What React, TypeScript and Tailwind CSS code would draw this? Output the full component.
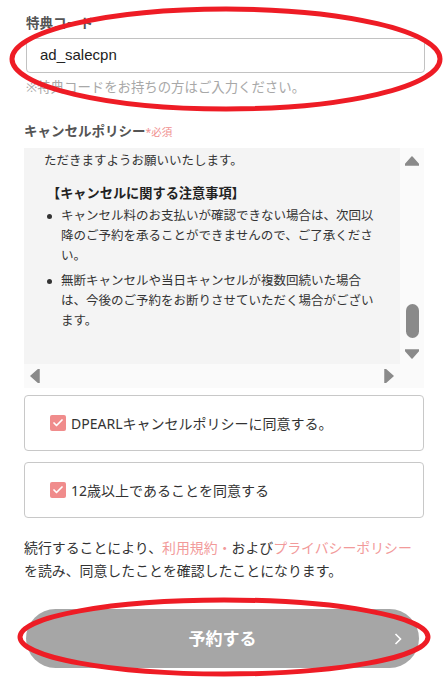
import { Check } from 'lucide-react'

const jp = "font-['Noto_Sans','Noto_Sans_CJK_JP',sans-serif]"

function AgreeBox({ label }: { label: string }) {
  return (
    <div className="flex h-[56px] items-center rounded-[4px] border border-[#c8c8c8] bg-white pl-[25px]">
      <span className="flex h-[16px] w-[16px] items-center justify-center rounded-[2px] bg-[#f08c8c]">
        <Check className="h-[12px] w-[12px] text-white" strokeWidth={3.5} />
      </span>
      <span className="ml-[5px] text-[14px] text-[#333]">{label}</span>
    </div>
  )
}

function Tri({ dir }: { dir: 'up' | 'down' | 'left' | 'right' }) {
  const pts = {
    up: '0,10 7,2 14,10',
    down: '0,2 14,2 7,10',
    left: '10,0 10,14 2,7',
    right: '2,0 2,14 10,7',
  }[dir]
  const size = dir === 'up' || dir === 'down' ? 'h-[12px] w-[14px]' : 'h-[14px] w-[12px]'
  return (
    <svg viewBox={dir === 'up' || dir === 'down' ? '0 0 14 12' : '0 0 12 14'} className={size}>
      <polygon points={pts} fill="#8a8a8a" strokeLinejoin="round" stroke="#8a8a8a" strokeWidth="1.5" />
    </svg>
  )
}

function Bullet({ children, className = '' }: { children: string; className?: string }) {
  return (
    <li className={`flex ${className}`}>
      <span className="flex h-[20px] w-[17px] shrink-0 items-center pl-[3px]">
        <span className="h-[5px] w-[5px] rounded-full bg-[#333]" />
      </span>
      <span>{children}</span>
    </li>
  )
}

export default function App() {
  return (
    <div className={`relative h-[686px] w-[445px] overflow-hidden bg-white ${jp}`}>
      <div className="px-[24px] pt-[13px]">
        {/* 特典コード */}
        <div className="pl-[2px] text-[13.5px] font-bold leading-[20px] text-[#555]">特典コード</div>
        <div className="ml-[2px] mt-[5px] flex h-[35px] w-[399px] items-center rounded-[4px] border border-[#c2c2c2] bg-white pl-[13px] font-['Liberation_Sans',sans-serif] text-[15px] text-[#222]">
          ad_salecpn
        </div>
        <div className="mt-[4px] pl-[2px] text-[13.4px] leading-[20px] text-[#a8a8a8]">※特典コードをお持ちの方はご入力ください。</div>

        {/* キャンセルポリシー */}
        <div className="mt-[24px] flex items-baseline text-[13.5px] font-bold leading-[20px] text-[#555]">
          キャンセルポリシー<span className="text-[10.5px] font-normal text-[#f09090]">*必須</span>
        </div>
        <div className="mt-[6px] grid h-[240px] w-[400px] grid-cols-[376px_24px] grid-rows-[216px_24px] bg-[#fafafa]">
          <div className="overflow-hidden bg-[#f4f4f4] pl-[20px] pr-[16px] pt-[3px] text-[12.5px] leading-[20px] text-[#333]">
            <p>ただきますようお願いいたします。</p>
            <p className="mt-[12px] pl-[3px] text-[13.2px] font-bold text-[#222]">【キャンセルに関する注意事項】</p>
            <ul className="mt-[3px]">
              <Bullet>キャンセル料のお支払いが確認できない場合は、次回以降のご予約を承ることができませんので、ご了承ください。</Bullet>
              <Bullet className="mt-[5px]">無断キャンセルや当日キャンセルが複数回続いた場合は、今後のご予約をお断りさせていただく場合がございます。</Bullet>
            </ul>
          </div>
          <div className="flex flex-col items-center justify-between pb-[4px] pt-[7px]">
            <Tri dir="up" />
            <div className="mt-auto mb-[10px] h-[34px] w-[13px] rounded-full bg-[#8a8a8a]" />
            <Tri dir="down" />
          </div>
          <div className="flex items-center justify-between px-[5px]">
            <Tri dir="left" />
            <Tri dir="right" />
          </div>
          <div />
        </div>

        {/* 同意 */}
        <div className="mt-[7px] flex w-[400px] flex-col gap-[11px]">
          <AgreeBox label="DPEARLキャンセルポリシーに同意する。" />
          <AgreeBox label="12歳以上であることを同意する" />
        </div>

        <p className="mt-[18px] text-[13.9px] leading-[23px] text-[#333]">
          続行することにより、<span className="text-[#f29a9a]">利用規約・</span>および<span className="text-[#f29a9a]">プライバシーポリシー</span>
          を読み、同意したことを確認したことになります。
        </p>

        <button className="relative mx-auto mt-[27px] flex h-[59px] w-[393px] items-center justify-center rounded-full bg-[#a6a6a6] text-[17px] font-bold text-white">
          予約する
          <svg viewBox="0 0 8 12" className="absolute right-[17px] h-[12px] w-[8px]">
            <polyline points="1.5,1 6.5,6 1.5,11" fill="none" stroke="white" strokeWidth="1.6" />
          </svg>
        </button>
      </div>

      {/* annotations */}
      <svg className="pointer-events-none absolute inset-0 h-[686px] w-[445px]" viewBox="0 0 445 686">
        <ellipse cx="226" cy="59" rx="214" ry="50" fill="none" stroke="#ee1c25" strokeWidth="5" />
        <ellipse cx="224" cy="637" rx="204" ry="37" fill="none" stroke="#ee1c25" strokeWidth="5" />
      </svg>
    </div>
  )
}
